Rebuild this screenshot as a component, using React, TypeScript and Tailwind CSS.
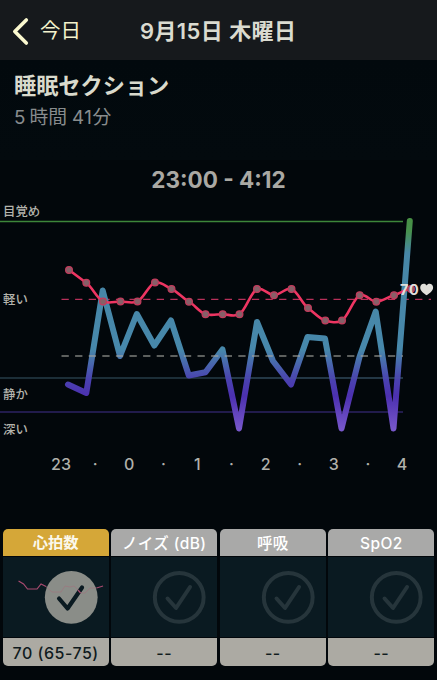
import React from "react"

type Point = [number, number]

type CardProps = {
  title: string
  value: string
  active?: boolean
}

const heart: Point[] = [
  [69, 270], [86.3, 282.8], [103, 301.5], [120.5, 301.5], [137.5, 301.5], [155, 282.5], [171.5, 289],
  [189, 301.7], [205.5, 314.2], [222.7, 314.2], [239.5, 314.2], [257, 289], [274, 295.2], [291.5, 289],
  [308, 308], [325.3, 320.5], [342, 320.5], [359.7, 295.2], [376.3, 301.7], [394, 295.2], [411, 289],
]

const sleep: Point[] = [
  [68, 384.5], [86.3, 393], [102.7, 290.5], [120, 356], [136.8, 314], [154.3, 345.5], [171, 320.5],
  [188.8, 375.5], [205.5, 372.3], [222.5, 349.5], [239, 428.5], [257, 322], [273, 361], [291, 384.5],
  [307.5, 337], [325, 338.5], [341.5, 428.5], [359.5, 357], [375.7, 311.5], [393.5, 428.5], [409.8, 221],
]

const hours = ["23", "·", "0", "·", "1", "·", "2", "·", "3", "·", "4"]

// smooth curve through all the points
function curve(p: Point[]) {
  const m = p.map((c, i) => {
    if (i === 0 || i === p.length - 1) return i === 0 ? (p[1][1] - c[1]) / (p[1][0] - c[0]) : 0
    return ((p[i + 1][1] - p[i - 1][1]) / (p[i + 1][0] - p[i - 1][0])) * 0.75
  })
  let d = `M${p[0][0]} ${p[0][1]}`
  for (let i = 1; i < p.length; i++) {
    const h = (p[i][0] - p[i - 1][0]) / 3
    d += `C${p[i - 1][0] + h} ${p[i - 1][1] + m[i - 1] * h} ${p[i][0] - h} ${p[i][1] - m[i] * h} ${p[i][0]} ${p[i][1]}`
  }
  return d
}

function Chart() {
  return (
    <svg className="block h-[249px] w-full" viewBox="0 198 437 249">
      <defs>
        <linearGradient id="stage" gradientUnits="userSpaceOnUse" x1="0" y1="219" x2="0" y2="430">
          <stop offset="0" stopColor="#479044" />
          <stop offset="0.06" stopColor="#47914f" />
          <stop offset="0.16" stopColor="#4786a6" />
          <stop offset="0.62" stopColor="#4788ab" />
          <stop offset="0.76" stopColor="#4a42b0" />
          <stop offset="0.84" stopColor="#4c30b0" />
          <stop offset="1" stopColor="#7858cb" />
        </linearGradient>
      </defs>
      <g fill="#b4b4ad" fontSize="12.4" fontWeight="500">
        <text x="3" y="216.3">目覚め</text>
        <text x="3" y="303.7">軽い</text>
        <text x="3" y="399">静か</text>
        <text x="3" y="433.5">深い</text>
      </g>
      <path d="M0 221.5H403" stroke="#3d863a" strokeWidth="1.3" />
      <path d="M0 378H403" stroke="#263c48" strokeWidth="1.6" />
      <path d="M0 412H403" stroke="#211b4c" strokeWidth="1.8" />
      <path d="M61.5 299.4H431" stroke="#b8305a" strokeWidth="1.4" strokeDasharray="7.3 6.3" />
      <path
        d={"M" + sleep.map((p) => p.join(" ")).join("L")}
        fill="none"
        stroke="url(#stage)"
        strokeWidth="6"
        strokeLinecap="round"
        strokeLinejoin="round"
      />
      <path d="M61.5 356H403" stroke="#a5a5a0" strokeOpacity="0.75" strokeWidth="1.4" strokeDasharray="7.3 6.3" />
      <path d="M230 378H403" stroke="#526c91" strokeOpacity="0.3" strokeWidth="1.2" />
      <path d={curve(heart)} fill="none" stroke="#ee3562" strokeWidth="2.6" />
      {heart.map(([x, y]) => (
        <circle key={x} cx={x} cy={y} r="3.4" fill="#875f68" stroke="#c33b5c" strokeWidth="1.2" />
      ))}
      <text x="400" y="294.5" fill="#e0dfda" fontSize="14.4" fontWeight="700" textLength="18.8">70</text>
      <path
        d="M426.6 295.3C423.2 293 420.2 290.6 420.2 287.5C420.2 285.2 421.8 283.7 423.7 283.7C425 283.7 426.1 284.4 426.6 285.4C427.2 284.4 428.3 283.7 429.6 283.7C431.5 283.7 433.1 285.2 433.1 287.5C433.1 290.6 430 293 426.6 295.3Z"
        fill="#e0dfda"
      />
    </svg>
  )
}

function Card(props: CardProps) {
  return (
    <div className="flex flex-col gap-px overflow-hidden rounded-[5px]">
      <div
        className={
          props.active
            ? "flex h-[27px] items-center justify-center bg-[#d5a738] pt-[2px] text-[15.3px] font-semibold text-[#fbf8ec]"
            : "flex h-[27px] items-center justify-center bg-[#a9a9a8] pt-[2px] text-[15.5px] font-medium tracking-[0.4px] text-white"
        }
      >
        {props.title}
      </div>
      <svg className="block h-[80px] w-full bg-[#0a1a21]" viewBox="0 0 106 80">
        {props.active ? (
          <g>
            <circle cx="68.2" cy="40.3" r="26.4" fill="#8a8d88" />
            <path d="M56 41.5L64.5 51.5L79 30.5" fill="none" stroke="#0a1a21" strokeWidth="4.2" strokeLinecap="round" strokeLinejoin="round" />
            <path
              d="M15.5 24L20.5 27L24.5 32H34L38 27L43 29.5"
              fill="none"
              stroke="#a94a70"
              strokeWidth="1.2"
            />
            <path d="M43 29.5L49 35H58L62 29L67 30L71 29L78 36L82 36L87 31L93.5 31" fill="none" stroke="#a2727d" strokeOpacity="0.6" strokeWidth="1" />
            <path d="M93.5 31L100 29" stroke="#a94a70" strokeWidth="1.2" />
            <path d="M75 33L77.5 36" stroke="#a94a70" strokeWidth="1.2" />
          </g>
        ) : (
          <g fill="none" stroke="#26353b" strokeLinecap="round" strokeLinejoin="round">
            <circle cx="68.2" cy="40.3" r="24.4" strokeWidth="4" />
            <path d="M56.5 41.5L65 51L79 30" strokeWidth="4" />
          </g>
        )}
      </svg>
      <div className="flex h-7 items-center justify-center bg-[#acaaa3] pt-px text-[16px] font-medium tracking-[0.5px] text-[#101b20]">
        {props.value}
      </div>
    </div>
  )
}

export default function App() {
  return (
    <div className="flex h-[680px] w-[437px] flex-col overflow-hidden bg-[#02070b] font-[Inter,'Noto_Sans_CJK_JP',sans-serif]">
      <header className="grid h-[60px] shrink-0 grid-cols-[140px_1fr] items-center bg-[#16191c]">
        <div className="flex items-center pl-[11px] text-[20.5px] leading-[60px] text-[#f4f3cc]">
          <svg className="mr-[11px] h-[30px] w-[18px]" viewBox="0 0 18 30" fill="none">
            <path d="M15.3 4L3.8 15.5L15.3 27" stroke="#fbf9cf" strokeWidth="3.6" strokeLinecap="round" strokeLinejoin="round" />
          </svg>
          <span className="pt-px">今日</span>
        </div>
        <h1 className="text-[22px] font-semibold leading-[58px] tracking-[0.4px] text-[#dadbd0]">9月15日 木曜日</h1>
      </header>

      <section className="h-[100px] shrink-0 bg-linear-to-b from-[#02090d] to-[#030a0e] px-[14px] pt-[10px]">
        <h2 className="text-[22.2px] font-bold leading-[32px] text-[#d9dacc]">睡眠セクション</h2>
        <p className="text-[18.8px] leading-[32px] text-[#888c8d]">
          5<span className="ml-[4px]">時間</span><span className="ml-[5px] tracking-[0.5px]">41分</span>
        </p>
      </section>

      <section className="shrink-0">
        <h3 className="h-[38px] text-center text-[22.5px] font-bold leading-[40px] text-[#aaa9a4]">23:00 - 4:12</h3>
        <Chart />
        <div className="ml-[44px] grid w-[375px] grid-cols-11 text-center text-[16px] font-medium leading-[35px] text-[#b0b0aa]">
          {hours.map((h, i) => (
            <span key={i}>{h}</span>
          ))}
        </div>
      </section>

      <div className="mt-auto mb-[14px] grid shrink-0 grid-cols-4 gap-[2.5px] px-[2.6px]">
        <Card title="心拍数" value="70 (65-75)" active />
        <Card title="ノイズ (dB)" value="--" />
        <Card title="呼吸" value="--" />
        <Card title="SpO2" value="--" />
      </div>
    </div>
  )
}
